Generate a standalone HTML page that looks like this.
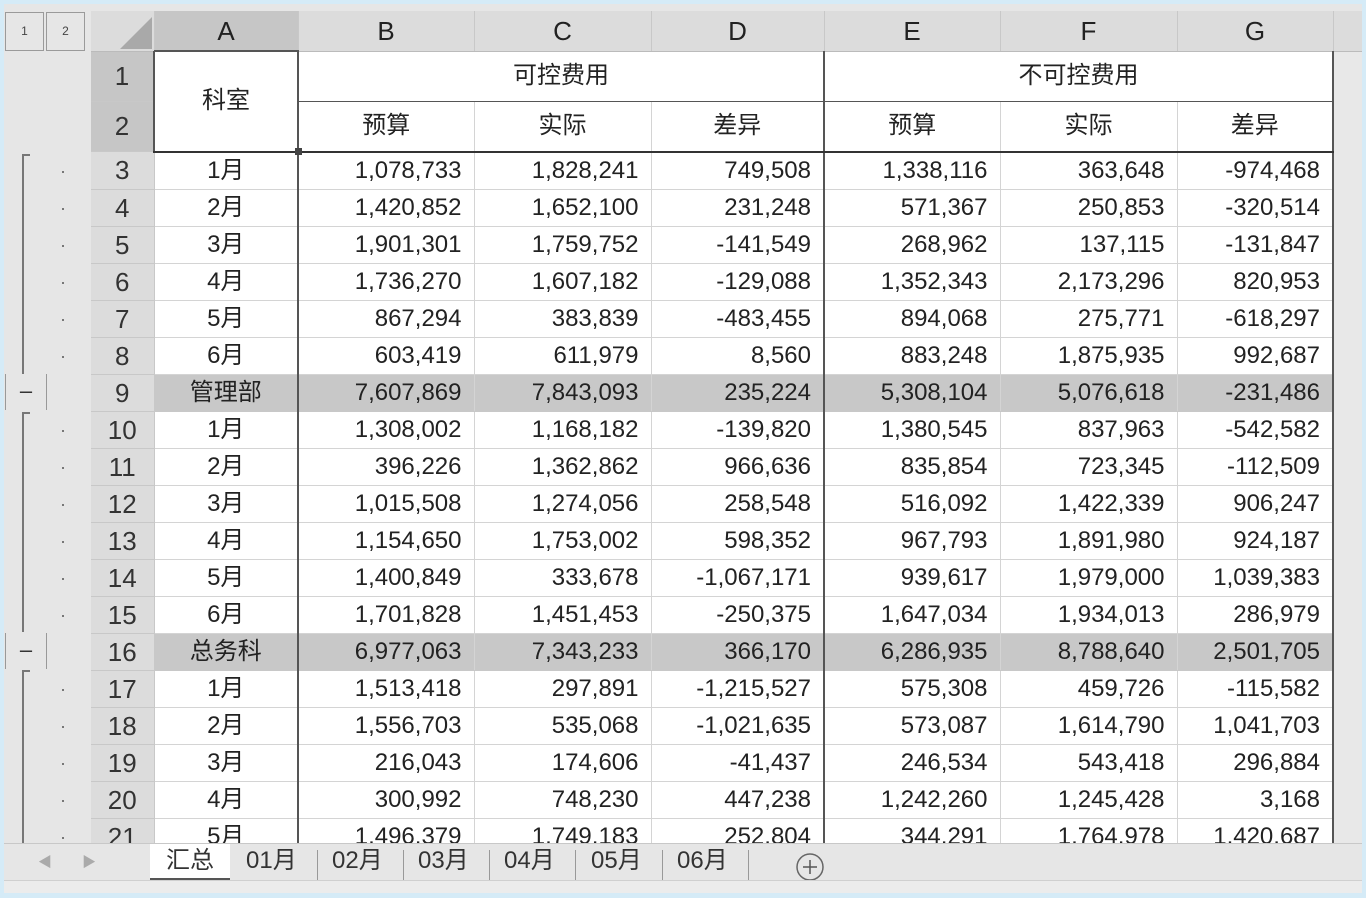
<!DOCTYPE html>
<html><head><meta charset="utf-8"><style>
body{margin:0;width:1366px;height:898px;background:#d5ebf7;overflow:hidden;font-family:"Liberation Sans","Noto Sans CJK SC",sans-serif;color:#222}
#app{position:absolute;left:4px;top:4px;width:1358px;height:889px;background:#e6e6e6;overflow:hidden}
#grid{position:absolute;left:87px;top:7px;border-collapse:collapse;table-layout:fixed;width:1282px}
#grid td{height:36px;padding:0 12px 0 0;font-size:24px;text-align:right;border-bottom:1px solid #d4d4d4;border-right:1px solid #d4d4d4;background:#fff;white-space:nowrap;overflow:hidden;line-height:36px}
#grid td.rh{background:#dcdcdc;text-align:center;padding:0;border-color:#c8c8c8;color:#333;font-size:26px}
#grid td.c{text-align:center;padding:0}
#grid tr.s td{background:#c8c8c8;border-bottom-color:#c8c8c8}
#grid tr.s td.rh{background:#dcdcdc;border-bottom-color:#c8c8c8}
#grid td.tA{border-right:2px solid #555}
#grid td.tD{border-right:2px solid #555}
#grid td.tG{border-right:2px solid #555}
#grid tr.ch td{height:39px;background:#dcdcdc;text-align:center;padding:0;font-size:26px;border-color:#c8c8c8;border-bottom:1px solid #bbb}
#grid tr.ch td.selA{background:#c6c6c6}
#grid tr.hd td{height:49px;text-align:center;padding:0;font-size:24px}
#grid tr.hd td.rh{background:#c6c6c6;font-size:26px}
#grid tr.h2 td{border-bottom:2px solid #333}
#grid tr.h2 td.rh{border-bottom:1px solid #c8c8c8}
.btn{position:absolute;width:37px;height:37px;border:1px solid #9a9a9a;background:#e6e6e6;font-size:12px;text-align:center;line-height:37px;color:#444}
.dot{position:absolute;left:58px;width:2px;height:2px;background:#777}
.br{position:absolute;left:18px;width:2px;background:#777}
.brt{position:absolute;left:18px;width:8px;height:2px;background:#777}
.minus{position:absolute;left:1px;width:40px;height:36px;border-left:1px solid #999;border-right:1px solid #999;text-align:center;font-size:22px;line-height:34px;color:#333}
#tabs{position:absolute;left:0;top:839px;width:1358px;height:37px;background:#e6e6e6;border-top:1px solid #c8c8c8;font-size:24px}
.tab{position:absolute;top:0;height:34px;line-height:34px;color:#333}
.sep{position:absolute;top:6px;width:1px;height:30px;background:#999}
#bot{position:absolute;left:0;top:876px;width:1358px;height:13px;background:#ececec;border-top:1px solid #d0d0d0}
</style></head><body><div id="app">
<div class="btn" style="left:1px;top:8px">1</div><div class="btn" style="left:42px;top:8px">2</div>
<table id="grid">
<colgroup><col style="width:63px"><col style="width:144px"><col style="width:176px"><col style="width:177px"><col style="width:173px"><col style="width:176px"><col style="width:177px"><col style="width:156px"><col style="width:40px"></colgroup>
<tr class="ch"><td style="background:#dcdcdc;position:relative"><svg width="34" height="34" style="position:absolute;right:2px;bottom:2px"><polygon points="34,2 34,34 2,34" fill="#a9a9a9"/></svg></td><td class="selA">A</td><td>B</td><td>C</td><td>D</td><td>E</td><td>F</td><td>G</td><td></td></tr>
<tr class="hd"><td class="rh">1</td><td class="tA" rowspan="2" style="border:2px solid #555;border-bottom:2px solid #333">科室</td><td colspan="3" class="tD" style="border-bottom:1px solid #555">可控费用</td><td colspan="3" class="tG" style="border-bottom:1px solid #555">不可控费用</td><td style="background:#e8e8e8;border:none"></td></tr>
<tr class="hd h2"><td class="rh">2</td><td>预算</td><td>实际</td><td class="tD">差异</td><td>预算</td><td>实际</td><td class="tG">差异</td><td style="background:#e8e8e8;border:none"></td></tr>
<tr><td class="rh">3</td><td class="c tA">1月</td><td>1,078,733</td><td>1,828,241</td><td class="tD">749,508</td><td>1,338,116</td><td>363,648</td><td class="tG">-974,468</td><td style="background:#e8e8e8;border:none"></td></tr>
<tr><td class="rh">4</td><td class="c tA">2月</td><td>1,420,852</td><td>1,652,100</td><td class="tD">231,248</td><td>571,367</td><td>250,853</td><td class="tG">-320,514</td><td style="background:#e8e8e8;border:none"></td></tr>
<tr><td class="rh">5</td><td class="c tA">3月</td><td>1,901,301</td><td>1,759,752</td><td class="tD">-141,549</td><td>268,962</td><td>137,115</td><td class="tG">-131,847</td><td style="background:#e8e8e8;border:none"></td></tr>
<tr><td class="rh">6</td><td class="c tA">4月</td><td>1,736,270</td><td>1,607,182</td><td class="tD">-129,088</td><td>1,352,343</td><td>2,173,296</td><td class="tG">820,953</td><td style="background:#e8e8e8;border:none"></td></tr>
<tr><td class="rh">7</td><td class="c tA">5月</td><td>867,294</td><td>383,839</td><td class="tD">-483,455</td><td>894,068</td><td>275,771</td><td class="tG">-618,297</td><td style="background:#e8e8e8;border:none"></td></tr>
<tr><td class="rh">8</td><td class="c tA">6月</td><td>603,419</td><td>611,979</td><td class="tD">8,560</td><td>883,248</td><td>1,875,935</td><td class="tG">992,687</td><td style="background:#e8e8e8;border:none"></td></tr>
<tr class="s"><td class="rh">9</td><td class="c tA">管理部</td><td>7,607,869</td><td>7,843,093</td><td class="tD">235,224</td><td>5,308,104</td><td>5,076,618</td><td class="tG">-231,486</td><td style="background:#e8e8e8;border:none"></td></tr>
<tr><td class="rh">10</td><td class="c tA">1月</td><td>1,308,002</td><td>1,168,182</td><td class="tD">-139,820</td><td>1,380,545</td><td>837,963</td><td class="tG">-542,582</td><td style="background:#e8e8e8;border:none"></td></tr>
<tr><td class="rh">11</td><td class="c tA">2月</td><td>396,226</td><td>1,362,862</td><td class="tD">966,636</td><td>835,854</td><td>723,345</td><td class="tG">-112,509</td><td style="background:#e8e8e8;border:none"></td></tr>
<tr><td class="rh">12</td><td class="c tA">3月</td><td>1,015,508</td><td>1,274,056</td><td class="tD">258,548</td><td>516,092</td><td>1,422,339</td><td class="tG">906,247</td><td style="background:#e8e8e8;border:none"></td></tr>
<tr><td class="rh">13</td><td class="c tA">4月</td><td>1,154,650</td><td>1,753,002</td><td class="tD">598,352</td><td>967,793</td><td>1,891,980</td><td class="tG">924,187</td><td style="background:#e8e8e8;border:none"></td></tr>
<tr><td class="rh">14</td><td class="c tA">5月</td><td>1,400,849</td><td>333,678</td><td class="tD">-1,067,171</td><td>939,617</td><td>1,979,000</td><td class="tG">1,039,383</td><td style="background:#e8e8e8;border:none"></td></tr>
<tr><td class="rh">15</td><td class="c tA">6月</td><td>1,701,828</td><td>1,451,453</td><td class="tD">-250,375</td><td>1,647,034</td><td>1,934,013</td><td class="tG">286,979</td><td style="background:#e8e8e8;border:none"></td></tr>
<tr class="s"><td class="rh">16</td><td class="c tA">总务科</td><td>6,977,063</td><td>7,343,233</td><td class="tD">366,170</td><td>6,286,935</td><td>8,788,640</td><td class="tG">2,501,705</td><td style="background:#e8e8e8;border:none"></td></tr>
<tr><td class="rh">17</td><td class="c tA">1月</td><td>1,513,418</td><td>297,891</td><td class="tD">-1,215,527</td><td>575,308</td><td>459,726</td><td class="tG">-115,582</td><td style="background:#e8e8e8;border:none"></td></tr>
<tr><td class="rh">18</td><td class="c tA">2月</td><td>1,556,703</td><td>535,068</td><td class="tD">-1,021,635</td><td>573,087</td><td>1,614,790</td><td class="tG">1,041,703</td><td style="background:#e8e8e8;border:none"></td></tr>
<tr><td class="rh">19</td><td class="c tA">3月</td><td>216,043</td><td>174,606</td><td class="tD">-41,437</td><td>246,534</td><td>543,418</td><td class="tG">296,884</td><td style="background:#e8e8e8;border:none"></td></tr>
<tr><td class="rh">20</td><td class="c tA">4月</td><td>300,992</td><td>748,230</td><td class="tD">447,238</td><td>1,242,260</td><td>1,245,428</td><td class="tG">3,168</td><td style="background:#e8e8e8;border:none"></td></tr>
<tr><td class="rh">21</td><td class="c tA">5月</td><td>1,496,379</td><td>1,749,183</td><td class="tD">252,804</td><td>344,291</td><td>1,764,978</td><td class="tG">1,420,687</td><td style="background:#e8e8e8;border:none"></td></tr>
</table>
<div style="position:absolute;left:291px;top:144px;width:7px;height:7px;background:#444"></div>
<div class="br" style="top:150px;height:220px"></div><div class="brt" style="top:150px"></div>
<div class="br" style="top:408px;height:220px"></div><div class="brt" style="top:408px"></div>
<div class="br" style="top:666px;height:175px"></div><div class="brt" style="top:666px"></div>
<div class="dot" style="top:167px"></div><div class="dot" style="top:204px"></div><div class="dot" style="top:241px"></div><div class="dot" style="top:278px"></div><div class="dot" style="top:315px"></div><div class="dot" style="top:352px"></div>
<div class="dot" style="top:426px"></div><div class="dot" style="top:463px"></div><div class="dot" style="top:500px"></div><div class="dot" style="top:537px"></div><div class="dot" style="top:574px"></div><div class="dot" style="top:611px"></div>
<div class="dot" style="top:685px"></div><div class="dot" style="top:722px"></div><div class="dot" style="top:759px"></div><div class="dot" style="top:796px"></div><div class="dot" style="top:833px"></div>
<div class="minus" style="top:370px">–</div><div class="minus" style="top:629px">–</div>
<div id="tabs">
<div style="position:absolute;left:34px;top:8px;color:#aaa;font-size:14px">◀</div>
<div style="position:absolute;left:78px;top:8px;color:#aaa;font-size:14px">▶</div>
<div class="tab" style="left:146px;width:80px;background:#fff;text-align:center;border-bottom:3px solid #555">汇总</div>
<div class="tab" style="left:242px">01月</div><div class="sep" style="left:313px"></div>
<div class="tab" style="left:328px">02月</div><div class="sep" style="left:399px"></div>
<div class="tab" style="left:414px">03月</div><div class="sep" style="left:485px"></div>
<div class="tab" style="left:500px">04月</div><div class="sep" style="left:571px"></div>
<div class="tab" style="left:587px">05月</div><div class="sep" style="left:658px"></div>
<div class="tab" style="left:673px">06月</div><div class="sep" style="left:744px"></div>
<svg style="position:absolute;left:791px;top:8px" width="30" height="30"><circle cx="15" cy="15" r="13" fill="none" stroke="#666" stroke-width="1.5"/><path d="M15 8v14M8 15h14" stroke="#555" stroke-width="1.5"/></svg>
</div>
<div id="bot"></div>
</div></body></html>
